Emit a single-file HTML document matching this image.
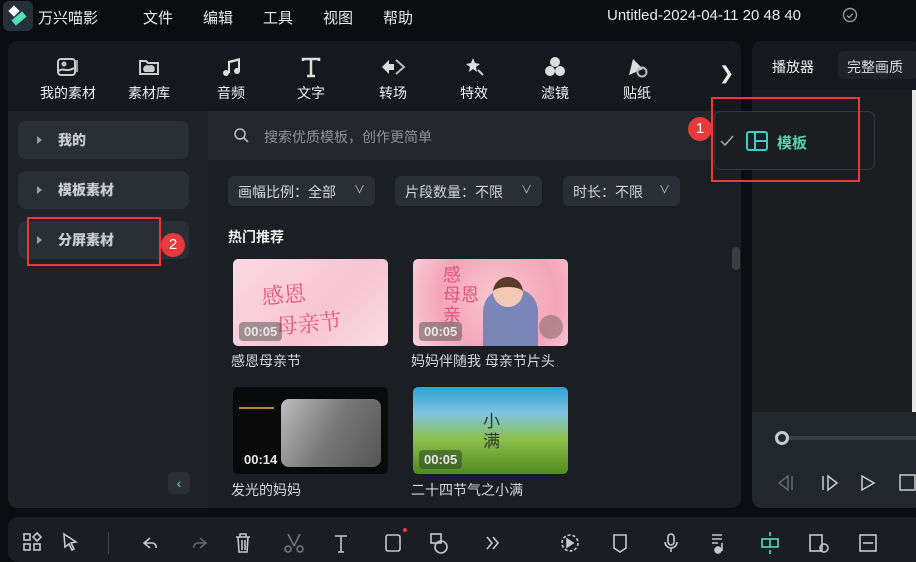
<!DOCTYPE html>
<html><head><meta charset="utf-8"><style>
*{margin:0;padding:0;box-sizing:border-box}
body{width:916px;height:555px;overflow:hidden;background:#0b0d10;font-family:"Liberation Sans","Noto Sans CJK SC",sans-serif;color:#e6e8ea;position:relative}
.a{position:absolute}
.menu span{position:absolute;top:7px;font-size:15px;color:#e8eaec}
.tool{position:absolute;top:55px;width:70px;text-align:center;font-size:14px;color:#eceef0}
.tool svg{display:block;margin:0 auto 4px}
.side{position:absolute;left:18px;width:171px;height:38px;background:#2a2e35;border-radius:8px;font-size:14px;color:#c9ccd0;font-weight:bold}
.side i{position:absolute;left:19px;top:15px;border-left:5px solid #9a9ea4;border-top:4px solid transparent;border-bottom:4px solid transparent}
.side b{position:absolute;left:40px;top:9px}
.flt{position:absolute;top:176px;height:30px;background:#2a2e35;border-radius:6px;font-size:14px;color:#d4d6d9;padding:6px 0 0 10px}
.flt em{position:absolute;right:10px;top:5px;font-style:normal;font-size:11px;color:#c0c3c7}
.th{position:absolute;width:155px;height:87px;border-radius:5px;overflow:hidden}
.dur{position:absolute;left:6px;bottom:5px;background:rgba(90,90,90,.55);color:#e8e8e8;font-size:13px;font-weight:bold;padding:2px 5px;border-radius:4px}
.lbl{position:absolute;font-size:14px;color:#d6d8db}
</style></head><body>
<!-- top bar -->
<div class="a" style="left:3px;top:1px;width:30px;height:30px;background:#25303c;border-radius:6px"></div>
<div class="a" style="left:10px;top:7px;width:8px;height:8px;background:#fff;transform:rotate(45deg)"></div>
<div class="a" style="left:12px;top:15px;width:14px;height:7px;background:#4fe0b4;transform:rotate(-40deg)"></div>
<div class="menu">
<span style="left:38px">万兴喵影</span><span style="left:143px">文件</span><span style="left:203px">编辑</span><span style="left:263px">工具</span><span style="left:323px">视图</span><span style="left:383px">帮助</span>
<span style="left:607px;font-size:15px">Untitled-2024-04-11 20 48 40</span>
</div>
<svg class="a" style="left:842px;top:7px" width="16" height="16" fill="none" stroke="#999" stroke-width="1.4"><circle cx="8" cy="8" r="6.5"/><path d="M5 8.5l2 2 4-4"/></svg>
<!-- main panel -->
<div class="a" style="left:8px;top:41px;width:733px;height:467px;background:#1b1e22;border-radius:10px;overflow:hidden">
 <div class="a" style="left:0;top:0;width:733px;height:70px;background:#15181d"></div>
 <div class="a" style="left:0;top:70px;width:200px;height:397px;background:#1f2329"></div>
 <div class="a" style="left:200px;top:70px;width:533px;height:49px;background:#23272d"></div>
</div>
<div class="tool" style="left:33px"><svg width="24" height="24" viewBox="0 0 24 24" fill="none" stroke="#ccc" stroke-width="2"><rect x="2" y="4" width="17" height="16" rx="3"/><circle cx="8" cy="9" r="1.5"/><path d="M3 16c4-4 7 2 15-3"/><path d="M21 5v12" stroke-width="1.5"/></svg>我的素材</div>
<div class="tool" style="left:114px"><svg width="24" height="24" viewBox="0 0 24 24" fill="none" stroke="#ccc" stroke-width="2"><path d="M3 6h6l2 2h10v11H3z"/><path d="M8 16h8a2 2 0 0 0-4-4 2 2 0 0 0-4 4z" fill="#ccc"/></svg>素材库</div>
<div class="tool" style="left:196px"><svg width="24" height="24" viewBox="0 0 24 24" fill="#ddd"><circle cx="7" cy="18" r="3"/><circle cx="18" cy="16" r="3"/><path d="M9 18V6l12-3v13h-2V6L11 8v10z"/></svg>音频</div>
<div class="tool" style="left:276px"><svg width="24" height="24" viewBox="0 0 24 24" fill="none" stroke="#ddd" stroke-width="2.5"><path d="M4 6V4h16v2M12 4v17M8 21h8"/></svg>文字</div>
<div class="tool" style="left:358px"><svg width="28" height="24" viewBox="0 0 28 24" fill="#ddd"><path d="M3 12l7-7v4h5v6h-5v4z"/><path d="M17 5l8 7-8 7" fill="none" stroke="#bbb" stroke-width="2"/></svg>转场</div>
<div class="tool" style="left:439px"><svg width="24" height="24" viewBox="0 0 24 24" fill="#ddd"><path d="M11 3l2 5 5 1-4 3 1 5-4-3-4 3 1-5-4-3 5-1z"/><path d="M16 15l5 5" stroke="#ccc" stroke-width="2"/></svg>特效</div>
<div class="tool" style="left:520px"><svg width="24" height="24" viewBox="0 0 24 24" fill="#ddd"><circle cx="12" cy="7" r="5"/><circle cx="7" cy="16" r="5"/><circle cx="17" cy="16" r="5"/></svg>滤镜</div>
<div class="tool" style="left:602px"><svg width="24" height="24" viewBox="0 0 24 24" fill="#ddd"><path d="M4 20L8 4l10 10z"/><circle cx="17" cy="17" r="4.5" fill="none" stroke="#bbb" stroke-width="2"/></svg>贴纸</div>
<div class="a" style="left:719px;top:63px;font-size:18px;color:#eee">&#x276F;</div>
<!-- sidebar -->
<div class="side" style="top:121px"><i></i><b>我的</b></div>
<div class="side" style="top:171px"><i></i><b>模板素材</b></div>
<div class="side" style="top:221px"><i></i><b>分屏素材</b></div>
<div class="a" style="left:27px;top:217px;width:134px;height:49px;border:2px solid #e83a3a"></div>
<div class="a" style="left:161px;top:233px;width:24px;height:24px;border-radius:50%;background:#e83a3a;color:#fff;font-size:15px;text-align:center;line-height:24px">2</div>
<div class="a" style="left:168px;top:472px;width:22px;height:22px;background:#2a2e35;border-radius:5px;color:#4fe0b4;text-align:center;font-size:14px;line-height:22px">&lsaquo;</div>
<!-- content -->
<svg class="a" style="left:233px;top:127px" width="16" height="16" viewBox="0 0 16 16" fill="none" stroke="#bbb" stroke-width="1.6"><circle cx="7" cy="7" r="5"/><path d="M11 11l4 4"/></svg>
<div class="a" style="left:264px;top:127px;font-size:14px;color:#8e9297">搜索优质模板，创作更简单</div>
<div class="flt" style="left:228px;width:147px">画幅比例：全部<em>&#x2228;</em></div>
<div class="flt" style="left:395px;width:147px">片段数量：不限<em>&#x2228;</em></div>
<div class="flt" style="left:563px;width:117px">时长：不限<em>&#x2228;</em></div>
<div class="a" style="left:228px;top:227px;font-size:14px;font-weight:bold;color:#eee">热门推荐</div>
<div class="a" style="left:732px;top:247px;width:8px;height:23px;background:#3a3e44;border-radius:4px"></div>
<div class="th" style="left:233px;top:259px;background:linear-gradient(135deg,#fbd9e2,#f6c4d2 60%,#fbdde5)"><div class="a" style="left:30px;top:18px;color:#e8577f;font-size:22px;font-family:'Noto Serif CJK SC',serif;transform:rotate(-5deg)">感恩<br>&nbsp;&nbsp;母亲节</div><span class="dur">00:05</span></div>
<div class="th" style="left:413px;top:259px;background:radial-gradient(circle at 55% 45%,#f8c8cf 0,#f4a4b8 60%,#f9d0dc 100%)"><div class="a" style="left:30px;top:6px;color:#e05578;font-size:18px;line-height:20px">感<br>母恩<br>亲</div><div class="a" style="left:70px;top:30px;width:55px;height:57px;background:#7a86b8;border-radius:40% 40% 0 0"></div><div class="a" style="left:80px;top:18px;width:30px;height:30px;background:#f3cbb4;border-radius:50%;border-top:10px solid #5a3a2a"></div><span class="dur">00:05</span><div class="a" style="left:126px;top:56px;width:24px;height:24px;border-radius:50%;background:rgba(120,100,100,.5)"></div></div>
<div class="lbl" style="left:231px;top:351px">感恩母亲节</div>
<div class="lbl" style="left:411px;top:351px">妈妈伴随我 母亲节片头</div>
<div class="th" style="left:233px;top:387px;background:#0a0a0a"><div class="a" style="left:48px;top:12px;width:100px;height:68px;background:linear-gradient(120deg,#bcbcbc,#777 50%,#555);border-radius:8px"></div><div class="a" style="left:6px;top:20px;width:35px;height:2px;background:#b08a2a"></div><span class="dur" style="background:none">00:14</span></div>
<div class="th" style="left:413px;top:387px;background:linear-gradient(180deg,#2f9fd3 0,#7fc4e0 30%,#8cc04a 60%,#4f8a1f)"><div class="a" style="left:70px;top:25px;color:#2a3a3a;font-size:17px;line-height:20px">小<br>满</div><span class="dur" style="background:rgba(40,60,40,.5)">00:05</span></div>
<div class="lbl" style="left:231px;top:480px">发光的妈妈</div>
<div class="lbl" style="left:411px;top:480px">二十四节气之小满</div>
<!-- right panel -->
<div class="a" style="left:752px;top:41px;width:170px;height:467px;background:#1b1d20;border-radius:10px;overflow:hidden">
 <div class="a" style="left:0;top:0;width:170px;height:49px;background:#15181d"></div>
 <div class="a" style="left:0;top:371px;width:170px;height:96px;background:#22272e"></div>
 <div class="a" style="left:160px;top:49px;width:6px;height:322px;background:#e8e8e8"></div>
</div>
<div class="a" style="left:772px;top:57px;font-size:14px;color:#eee">播放器</div>
<div class="a" style="left:838px;top:51px;width:80px;height:28px;background:#1f2328;border-radius:5px;font-size:14px;color:#ddd;padding:6px 0 0 9px">完整画质</div>
<div class="a" style="left:714px;top:111px;width:161px;height:59px;border:1px solid #33373d;border-radius:7px;background:#1b1d20"></div>
<svg class="a" style="left:719px;top:134px" width="16" height="14" fill="none" stroke="#aaa" stroke-width="1.5"><path d="M2 7l4 4 8-9"/></svg>
<div class="a" style="left:746px;top:131px;width:22px;height:20px;border:2px solid #3ad0c8;border-radius:3px"></div>
<div class="a" style="left:754px;top:132px;width:2px;height:18px;background:#3ad0c8"></div>
<div class="a" style="left:755px;top:140px;width:12px;height:2px;background:#3ad0c8"></div>
<div class="a" style="left:777px;top:132px;font-size:15px;font-weight:bold;color:#4fd6b4">模板</div>
<div class="a" style="left:711px;top:97px;width:149px;height:85px;border:2px solid #e83a3a"></div>
<div class="a" style="left:688px;top:117px;width:24px;height:24px;border-radius:50%;background:#e83a3a;color:#fff;font-size:15px;text-align:center;line-height:24px">1</div>
<div class="a" style="left:780px;top:436px;width:140px;height:4px;background:#3a3f47"></div>
<div class="a" style="left:775px;top:431px;width:14px;height:14px;border-radius:50%;background:#22272e;border:3px solid #c8cbd0"></div>
<svg class="a" style="left:776px;top:473px" width="140" height="20" fill="none" stroke-width="1.5"><path d="M12 3L3 10l9 7z M16 3v14" stroke="#666"/><path d="M47 3v14 M52 3l9 7-9 7z" stroke="#ccc"/><path d="M86 3l12 7-12 7z" stroke="#ccc"/><rect x="124" y="2" width="15" height="15" stroke="#ccc"/></svg>
<!-- bottom toolbar -->
<div class="a" style="left:8px;top:517px;width:915px;height:45px;background:#1a1d22;border-radius:10px"></div>
<div class="a" style="left:108px;top:532px;width:1px;height:22px;background:#444"></div>
<svg class="a" style="left:22px;top:532px" width="900" height="22" fill="none" stroke="#c5c8cc" stroke-width="1.6">
<rect x="2" y="2" width="6" height="6"/><rect x="2" y="12" width="6" height="6"/><rect x="12" y="12" width="6" height="6"/><path d="M15 1l4 4-4 4-4-4z"/>
<path d="M42 2l12 8-5 1 3 6-2 1-3-6-4 3z"/>
<path d="M128 6l-6 5 6 5M122 11h8a4 4 0 0 1 4 5"/>
<path d="M178 6l6 5-6 5M184 11h-8a4 4 0 0 0-4 5" stroke="#666"/>
<path d="M214 5h14M218 5V2h6v3M216 5l1 15h8l1-15M220 8v10M223 8v10"/>
<path d="M266 2l6 12M278 2l-6 12" stroke="#777"/><circle cx="266" cy="17" r="3" stroke="#777"/><circle cx="278" cy="17" r="3" stroke="#777"/>
<path d="M313 4h12M319 4v16M316 20h6"/>
<rect x="364" y="3" width="14" height="16" rx="2"/>
<rect x="409" y="2" width="10" height="9"/><circle cx="419" cy="15" r="6"/>
<path d="M465 5l5 6-5 6M471 5l5 6-5 6"/>
<circle cx="548" cy="11" r="8" stroke-dasharray="3 2"/><path d="M545 7l6 4-6 4z" fill="#c5c8cc"/>
<path d="M592 3h12v13l-6 4-6-4z"/>
<rect x="646" y="2" width="6" height="11" rx="3"/><path d="M643 10a6 6 0 0 0 12 0M649 16v4"/>
<path d="M690 3h10M690 7h10M690 11h6M700 11v8"/><circle cx="696" cy="18" r="3" fill="#c5c8cc"/>
<rect x="740" y="7" width="16" height="8" stroke="#4fe0b4"/><path d="M748 7v8M748 0v4M748 18v4" stroke="#4fe0b4"/>
<rect x="788" y="3" width="12" height="16"/><circle cx="802" cy="16" r="4"/>
<rect x="838" y="3" width="16" height="16"/><path d="M841 11h10"/>
</svg>
<div class="a" style="left:403px;top:528px;width:4px;height:4px;border-radius:50%;background:#e83a3a"></div>
</body></html>
